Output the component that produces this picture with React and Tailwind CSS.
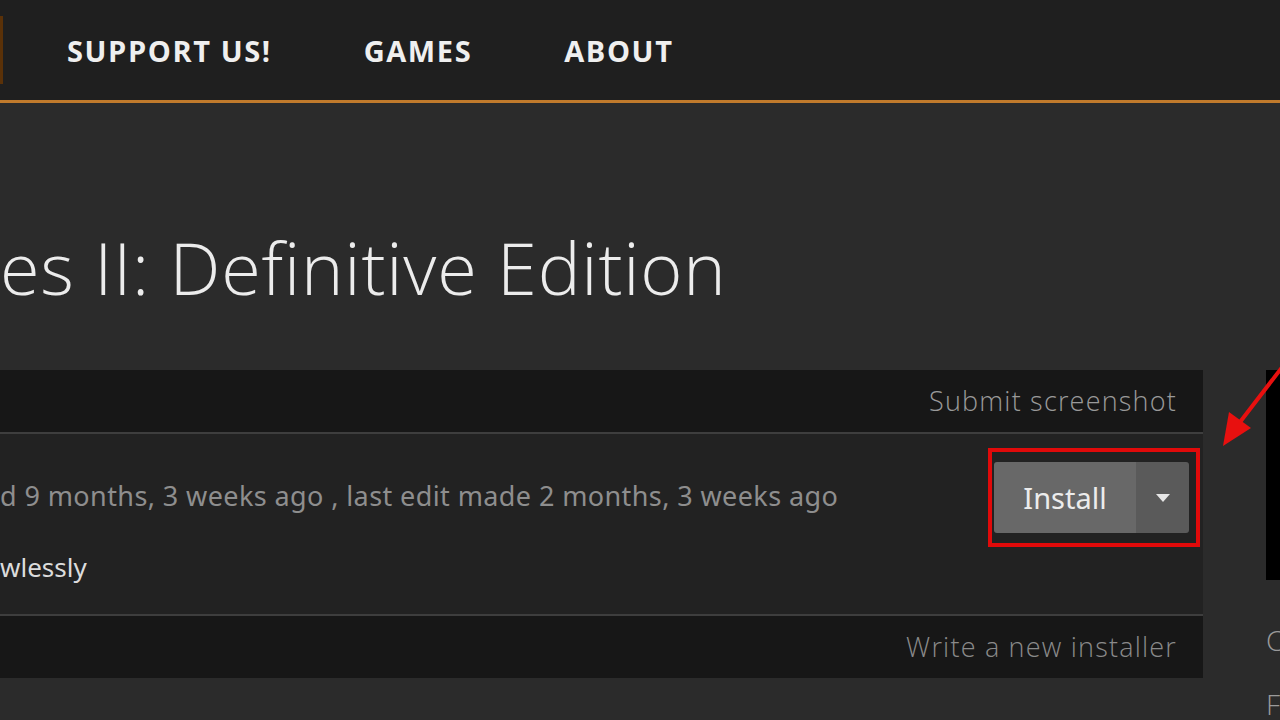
import React from 'react';

const navItems = ['SUPPORT US!', 'GAMES', 'ABOUT'];

const InstallButton = () => (
  <div className="border-[4px] border-[#e10a0a] px-[2px] py-[10px] pr-[7px]">
    <div className="flex h-[71px] rounded-[3px] overflow-hidden">
      <div className="w-[142px] bg-[#686868] flex items-center justify-center text-[29px] text-[#ececec] font-['Noto_Sans',sans-serif]">
        Install
      </div>
      <div className="w-[53px] bg-[#5a5a5a] flex items-center justify-center">
        <svg width="14" height="8" viewBox="0 0 14 8">
          <path d="M0 0 H14 L7 8 Z" fill="#e6e6e6" />
        </svg>
      </div>
    </div>
  </div>
);

const App = () => {
  return (
    <div className="relative w-[1280px] h-[720px] overflow-hidden bg-[#2b2b2b] font-['Open_Sans',sans-serif]">
      {/* Header */}
      <header className="h-[103px] bg-[#1f1f1f] border-b-[3px] border-[#c07a2c] flex items-center">
        <div className="w-[3px] h-[68px] bg-[#5a3108]" />
        <nav className="flex items-center gap-[92px] ml-[64px] pt-[2px]">
          {navItems.map((item) => (
            <span key={item} className="text-[29px] font-bold text-[#efefef] tracking-[1.6px]">
              {item}
            </span>
          ))}
        </nav>
      </header>

      <div className="flex">
        {/* Main column */}
        <div className="w-[1203px] shrink-0">
          <h1 className="mt-[128px] h-[139px] text-[72px] font-light leading-[1] text-[#ececec] tracking-[0.8px]">
            es II: Definitive Edition
          </h1>

          <div className="bg-[#222222]">
            <div className="h-[62px] bg-[#171717] flex items-center justify-end pr-[26px] text-[27px] font-light text-[#9a9a9a] tracking-[1.2px]">
              Submit screenshot
            </div>
            <div className="h-[2px] bg-[#3e3e3e]" />
            <div className="h-[180px] flex justify-between">
              <div className="pt-[44px] font-['Noto_Sans',sans-serif]">
                <p className="text-[27px] text-[#8e8e8e] leading-[36px] tracking-[0.4px]">
                  d 9 months, 3 weeks ago , last edit made 2 months, 3 weeks ago
                </p>
                <p className="mt-[35px] text-[26px] text-[#dcdcdc] leading-[36px]">wlessly</p>
              </div>
              <div className="pt-[14px] pr-[3px]">
                <InstallButton />
              </div>
            </div>
            <div className="h-[2px] bg-[#3e3e3e]" />
            <div className="h-[62px] bg-[#171717] flex items-center justify-end pr-[26px] text-[27px] font-light text-[#8a8a8a] tracking-[1.2px]">
              Write a new installer
            </div>
          </div>
        </div>

        {/* Side column */}
        <aside className="ml-[63px] w-[300px] shrink-0 pt-[267px]">
          <div className="h-[210px] bg-black" />
          <p className="mt-[42px] text-[28px] font-light text-[#9a9a9a] leading-[36px]">Compatible</p>
          <p className="mt-[28px] text-[28px] font-light text-[#9a9a9a] leading-[36px]">Files</p>
        </aside>
      </div>

      {/* Red annotation arrow */}
      <svg className="absolute left-[1215px] top-[360px]" width="70" height="92" viewBox="0 0 70 92">
        <line x1="68" y1="6" x2="22" y2="66" stroke="#e8100f" strokeWidth="4" strokeLinecap="round" />
        <path d="M8 86 L14 52 L36 68 Z" fill="#e8100f" />
      </svg>
    </div>
  );
};

export default App;
